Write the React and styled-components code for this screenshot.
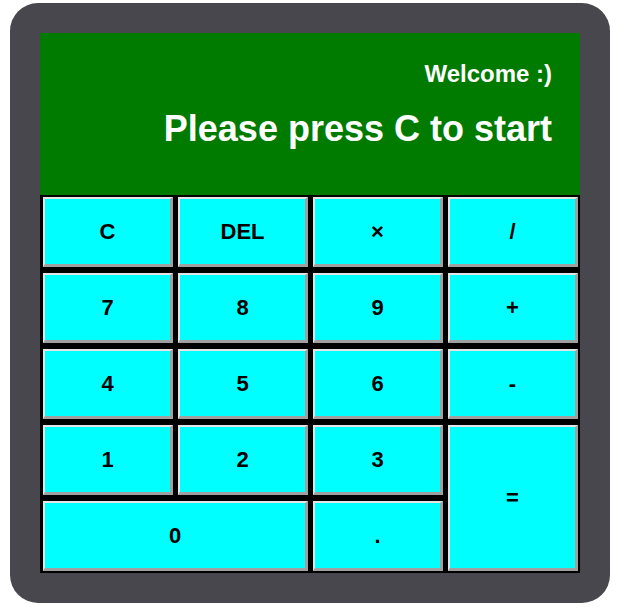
import React from 'react';
import styled, { createGlobalStyle } from 'styled-components';

const GlobalStyle = createGlobalStyle`
	html, body {
		margin: 0;
		padding: 0;
		background: #ffffff;
	}
	body {
		padding-top: 3px;
		font-family: "Liberation Sans", Arial, sans-serif;
	}
`;

const Case = styled.div`
	width: 600px;
	height: 600px;
	box-sizing: border-box;
	margin-left: 10px;
	padding: 30px;
	background: #48474d;
	border-radius: 28px;
	display: flex;
	flex-direction: column;
`;

const Display = styled.div`
	height: 162px;
	box-sizing: border-box;
	padding: 27px 28px 0;
	background: #007b00;
	color: #ffffff;
	font-weight: bold;
	text-align: right;
`;

const Greeting = styled.div`
	font-size: 24px;
`;

const Output = styled.div`
	font-size: 36px;
	margin-top: 20px;
`;

const Keys = styled.div`
	display: grid;
	grid-template-columns: repeat(4, 130px);
	grid-template-rows: repeat(5, 70px);
	column-gap: 5px;
	row-gap: 6px;
	padding: 2px 2px 2px 3px;
	background: #000000;
`;

const Key = styled.button`
	grid-column: ${props => props.wide ? 'span 2' : 'auto'};
	grid-row: ${props => props.tall ? 'span 2' : 'auto'};
	margin: 0;
	padding: 0;
	background: #00ffff;
	color: #000000;
	font-family: "Liberation Sans", Arial, sans-serif;
	font-size: 22px;
	font-weight: bold;
	border-style: solid;
	border-width: 2px 3px 3px 2px;
	border-color: #e4e4e4 #a0a0a0 #a0a0a0 #e4e4e4;
	cursor: pointer;
`;

const keys = [
	{label: 'C'}, {label: 'DEL'}, {label: '×'}, {label: '/'},
	{label: '7'}, {label: '8'}, {label: '9'}, {label: '+'},
	{label: '4'}, {label: '5'}, {label: '6'}, {label: '-'},
	{label: '1'}, {label: '2'}, {label: '3'}, {label: '=', tall: true},
	{label: '0', wide: true}, {label: '.'},
];

const App = () => {
	return (
		<>
			<GlobalStyle />
			<Case>
				<Display>
					<Greeting>Welcome :)</Greeting>
					<Output>Please press C to start</Output>
				</Display>
				<Keys>
					{keys.map(k => (
						<Key key={k.label} wide={k.wide} tall={k.tall}>{k.label}</Key>
					))}
				</Keys>
			</Case>
		</>
	);
}

export default App;
